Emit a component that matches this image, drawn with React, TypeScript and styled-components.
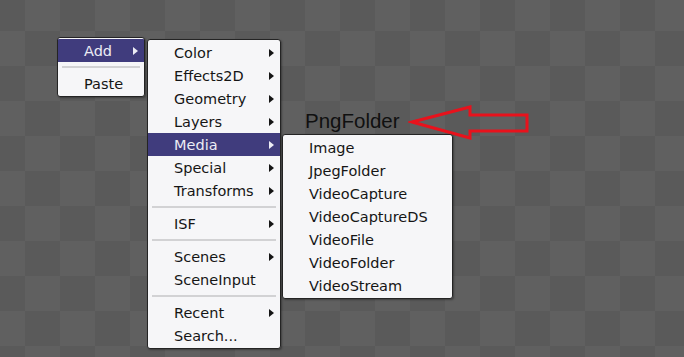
import React from "react";
import styled, { createGlobalStyle } from "styled-components";

const Global = createGlobalStyle`
  html, body { margin: 0; padding: 0; }
  body { width: 684px; height: 357px; overflow: hidden; }
`;

const Canvas = styled.div`
  position: relative;
  width: 684px;
  height: 357px;
  overflow: hidden;
  background: repeating-conic-gradient(#5a5a5a 0 25%, #606060 0 50%) 25px -4px / 70px 70px;
  font-family: "DejaVu Sans", Verdana, sans-serif;
`;

const Menu = styled.div<{ $top: number; $left: number; $width: number }>`
  position: absolute;
  top: ${(p) => p.$top}px;
  left: ${(p) => p.$left}px;
  width: ${(p) => p.$width}px;
  box-sizing: border-box;
  background: #f6f6f8;
  border: 1px solid #242424;
  border-radius: 3px;
  padding: 1px 0;
  box-shadow: 1px 1px 2px rgba(0, 0, 0, 0.35);
  display: flex;
  flex-direction: column;
  overflow: hidden;
`;

const Item = styled.div<{ $active?: boolean }>`
  height: 23px;
  display: flex;
  align-items: center;
  justify-content: space-between;
  padding: 0 6px 0 26px;
  font-size: 14.5px;
  color: ${(p) => (p.$active ? "#ececf4" : "#151515")};
  background: ${(p) => (p.$active ? "#403c7d" : "transparent")};
  white-space: nowrap;
`;

const Arrow = styled.span<{ $active?: boolean }>`
  width: 0;
  height: 0;
  border-top: 4px solid transparent;
  border-bottom: 4px solid transparent;
  border-left: 5px solid ${(p) => (p.$active ? "#ececf4" : "#151515")};
`;

const Separator = styled.div`
  height: 10px;
  display: flex;
  align-items: center;
  padding: 0 4px;
  &::after {
    content: "";
    flex: 1;
    height: 2px;
    background: #d2d2d4;
  }
`;

const Annotation = styled.div`
  position: absolute;
  left: 305px;
  top: 99px;
  height: 42px;
  display: flex;
  align-items: center;
  gap: 8px;
`;

const Note = styled.span`
  font-family: "Liberation Sans", Arial, sans-serif;
  font-size: 20.5px;
  line-height: 23px;
  color: #101010;
`;

type Entry = { label?: string; sub?: boolean; active?: boolean; sep?: boolean };

const MenuList = ({ items }: { items: Entry[] }) => (
  <>
    {items.map((it, i) =>
      it.sep ? (
        <Separator key={i} />
      ) : (
        <Item key={i} $active={it.active}>
          <span>{it.label}</span>
          {it.sub && <Arrow $active={it.active} />}
        </Item>
      )
    )}
  </>
);

const rootItems: Entry[] = [
  { label: "Add", sub: true, active: true },
  { sep: true },
  { label: "Paste" },
];

const addItems: Entry[] = [
  { label: "Color", sub: true },
  { label: "Effects2D", sub: true },
  { label: "Geometry", sub: true },
  { label: "Layers", sub: true },
  { label: "Media", sub: true, active: true },
  { label: "Special", sub: true },
  { label: "Transforms", sub: true },
  { sep: true },
  { label: "ISF", sub: true },
  { sep: true },
  { label: "Scenes", sub: true },
  { label: "SceneInput" },
  { sep: true },
  { label: "Recent", sub: true },
  { label: "Search..." },
];

const mediaItems: Entry[] = [
  { label: "Image" },
  { label: "JpegFolder" },
  { label: "VideoCapture" },
  { label: "VideoCaptureDS" },
  { label: "VideoFile" },
  { label: "VideoFolder" },
  { label: "VideoStream" },
];

export default function App() {
  return (
    <>
      <Global />
      <Canvas>
        <Annotation>
          <Note>PngFolder</Note>
          <svg width="124" height="42" viewBox="0 0 124 42">
            <polygon
              points="4,23 62,8 62,16 119,16 119,32 62,32 62,39"
              fill="none"
              stroke="#e8121c"
              strokeWidth="3"
            />
          </svg>
        </Annotation>
        <Menu $top={37} $left={57} $width={88}>
          <MenuList items={rootItems} />
        </Menu>
        <Menu $top={39} $left={147} $width={134}>
          <MenuList items={addItems} />
        </Menu>
        <Menu $top={134} $left={282} $width={171}>
          <MenuList items={mediaItems} />
        </Menu>
      </Canvas>
    </>
  );
}
